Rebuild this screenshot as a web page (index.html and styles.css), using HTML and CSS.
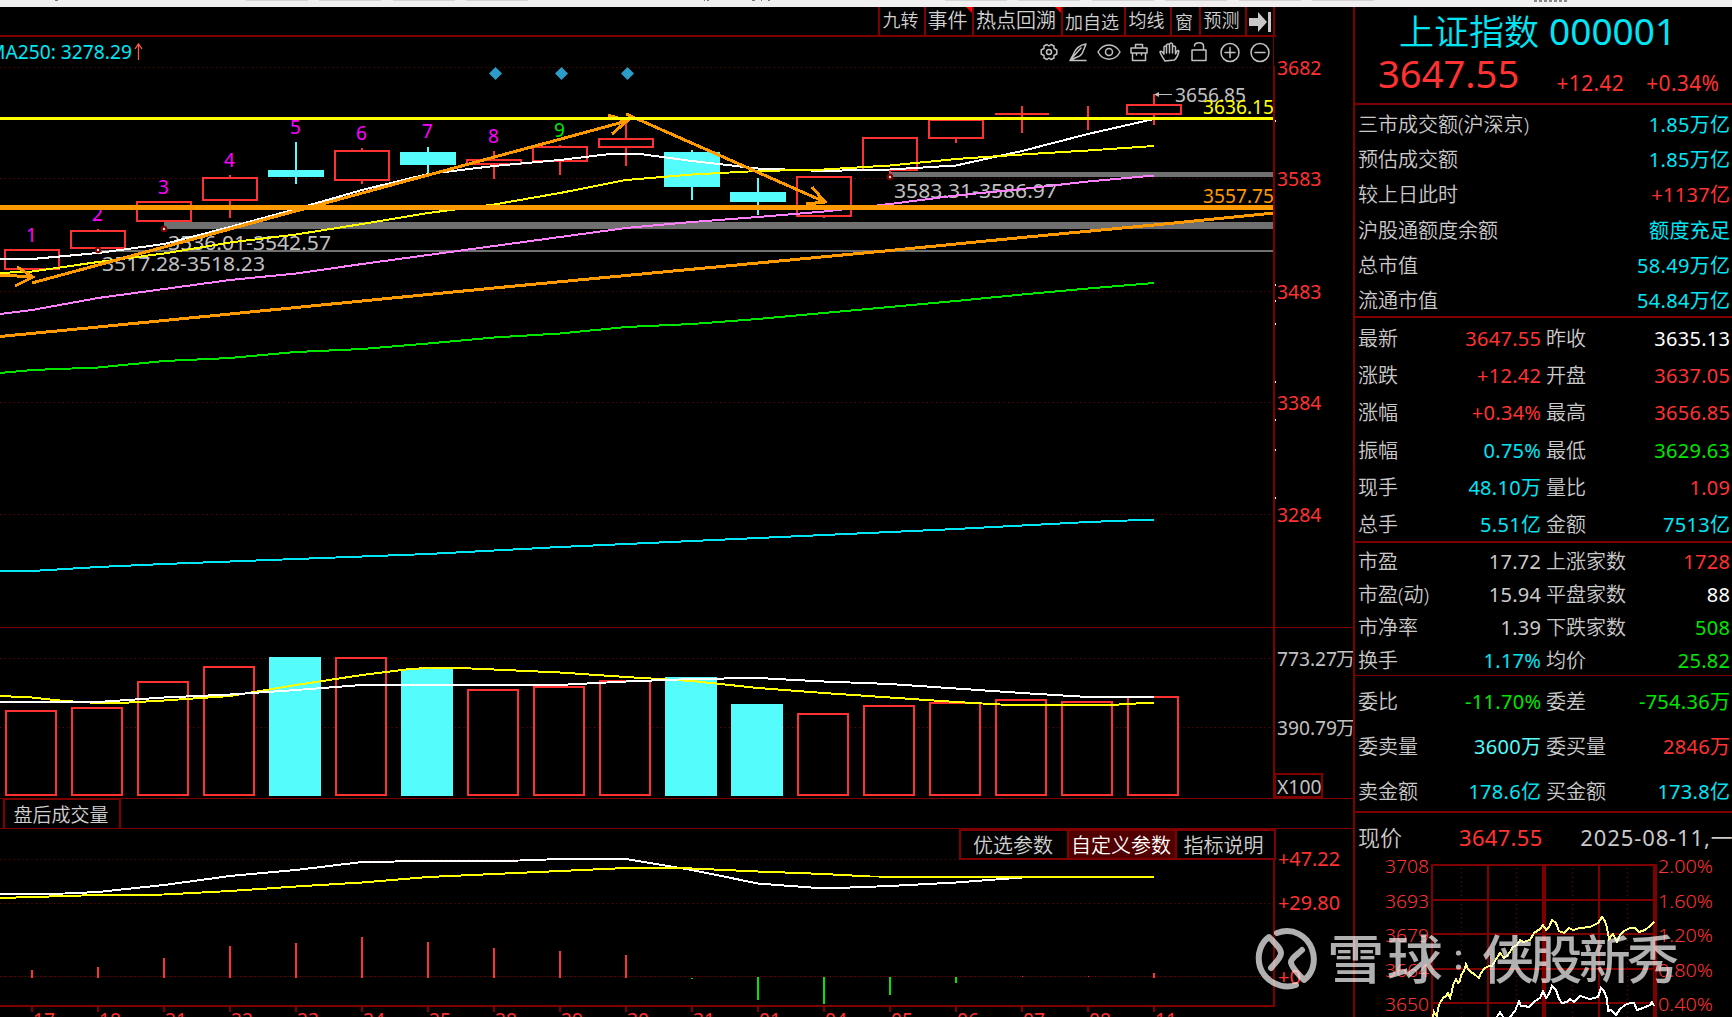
FILE: index.html
```html
<!DOCTYPE html>
<html lang="zh-CN">
<head>
    <meta charset="UTF-8">
    <meta name="viewport" content="width=device-width, initial-scale=1.0">
    <title>上证指数 000001</title>
    <link rel="stylesheet" href="styles.css">
</head>
<body>
    <svg class="strip" viewBox="0 0 1732 7">
        <path d="M246 .5h62M319 .5h62M393 .5h62M466 .5h62M945 .5h62M1018 .5h62M1092 .5h62M1165 .5h62M1239 .5h62M1312 .5h62" stroke="#d4d4d4"/>
        <path d="M55 .5h3M704 .5h1M707 .5h2M752 .5h3M761 .5h1M768 .5h2" stroke="#777"/>
        <path d="M1534 1h35" stroke="#888" stroke-width="2" stroke-dasharray="3 2"/>
    </svg>
    <div class="main">
        <div class="charts">
            <div class="toolbar">
                <div class="tool w46">九转</div>
                <div class="tool w48 big hot">事件</div>
                <div class="tool w89 big hot">热点回溯</div>
                <div class="tool w63 low">加自选</div>
                <div class="tool w46">均线</div>
                <div class="tool w29 low">窗</div>
                <div class="tool w46">预测</div>
                <div class="tool last">
                    <svg width="24" height="20" viewBox="0 0 24 20"><path d="M1 6h9V0l9 10-9 10v-6H1z" fill="#c8c8c8"/><path d="M21.5 0v20" stroke="#c8c8c8" stroke-width="3"/></svg>
                </div>
            </div>

            <svg class="panel" id="price" viewBox="0 37 1353 590"></svg>
            <svg class="panel" id="volume" viewBox="0 627 1353 171"></svg>
            <div class="tabs"><div class="tab">盘后成交量</div></div>
            <div class="indicator">
                <svg class="panel" id="macd" viewBox="0 829 1353 188"></svg>
                <div class="params">
                    <div class="param p1">优选参数</div>
                    <div class="param p2 active">自定义参数</div>
                    <div class="param p3">指标说明</div>
                </div>
            </div>
        </div>

        <div class="quote">
            <div class="head">
                <div class="name">上证指数 <span>000001</span></div>
                <div class="now red"><b>3647.55</b><i>+12.42</i><i>+0.34%</i></div>
            </div>
            <div class="group g1">
                <div class="row"><span>三市成交额(沪深京)</span><span class="cyan">1.85万亿</span></div>
                <div class="row"><span>预估成交额</span><span class="cyan">1.85万亿</span></div>
                <div class="row"><span>较上日此时</span><span class="red">+1137亿</span></div>
                <div class="row"><span>沪股通额度余额</span><span class="cyan">额度充足</span></div>
                <div class="row"><span>总市值</span><span class="cyan">58.49万亿</span></div>
                <div class="row"><span>流通市值</span><span class="cyan">54.84万亿</span></div>
            </div>
            <div class="group g2" id="g2"></div>
            <div class="group g3" id="g3"></div>
            <div class="group g4" id="g4"></div>
            <div class="mini">
                <div class="row mini-head"><span>现价</span><span class="red price">3647.55</span><span class="date">2025-08-11,一</span></div>
                <svg class="panel" id="minute" viewBox="1355 860 377 157"></svg>
            </div>
        </div>
    </div>

    <!-- watermark -->
    <svg class="watermark" viewBox="1250 920 440 80">
        <g fill="none" stroke="#fff" stroke-width="6" stroke-linecap="round" stroke-linejoin="round">
            <path d="M1277 933C1293 927 1307 936 1312 949C1317 964 1311 975 1304 980C1298 974 1291 966 1291 962C1291 958 1297 955 1302 950"/>
            <path d="M1296 985C1281 990 1265 981 1260 967C1256 953 1262 942 1269 937C1276 944 1281 949 1281 953C1281 958 1276 962 1271 968"/>
        </g>
        <g font-size="52" font-weight="500" fill="#fff">
            <text transform="translate(1327 979) scale(1.1 1)">雪</text>
            <text transform="translate(1387 979) scale(1.07 1)">球</text>
            <circle cx="1458.5" cy="953" r="2.6"/>
            <circle cx="1458.5" cy="967" r="2.6"/>
            <text x="1482" y="979" textLength="197">侠股新秀</text>
        </g>
    </svg>

    <script src="script.js"></script>
</body>
</html>
```

FILE: styles.css
```css
body {
    margin: 0;
    background: #000;
    color: #c0c0c0;
    font-family: "Noto Sans", "Noto Sans CJK SC", sans-serif;
    width: 1732px;
    height: 1017px;
    overflow: hidden;
    position: relative;
}
svg {
    display: block;
}
.strip {
    width: 1732px;
    height: 7px;
    background: #f0f0f0;
}
.main {
    display: flex;
    height: 1010px;
}
.charts {
    width: 1353px;
    display: flex;
    flex-direction: column;
}
.panel {
    width: 100%;
    flex: none;
}
.red { color: #ff3232; }
.cyan { color: #00e6f5; }
.aqua { color: #54fcfc; }
.green { color: #00e600; }
.white { color: #fff; }

/* toolbar */
.toolbar {
    display: flex;
    width: 1276px;
    height: 30px;
    box-sizing: border-box;
    padding-left: 878px;
    border-bottom: 2px solid #800000;
    color: #d0d0d0;
    font-family: "Noto Sans CJK SC", sans-serif;
    font-weight: 350;
    font-size: 18px;
    line-height: 25px;
}
.tool {
    box-sizing: border-box;
    border-left: 2px solid #800000;
    padding-right: 3px;
    text-align: center;
    white-space: nowrap;
    position: relative;
    flex: none;
}
.w46 { width: 46px; }
.w48 { width: 48px; }
.w89 { width: 89px; }
.w63 { width: 63px; }
.w29 { width: 29px; }
.big { font-size: 20px; }
.low { line-height: 28px; }
.last {
    width: 30px;
    border-right: 2px solid #800000;
    padding: 5px 0 0 1px;
}
.hot::after {
    content: "";
    position: absolute;
    right: 0;
    top: 0;
    border-top: 6px solid #f00;
    border-left: 6px solid transparent;
}

/* indicator */
.tabs {
    height: 31px;
    box-sizing: border-box;
    border-top: 1px solid #800000;
    border-bottom: 1px solid #800000;
    padding-left: 3px;
}
.tab {
    width: 118px;
    height: 29px;
    box-sizing: border-box;
    border: 2px solid #800000;
    border-top-width: 1px;
    border-bottom: 0;
    padding-right: 2px;
    text-align: center;
    color: #d0d0d0;
    font-family: "Noto Sans CJK SC", sans-serif;
    font-weight: 350;
    font-size: 19px;
    line-height: 27px;
}
.indicator {
    position: relative;
}
.params {
    position: absolute;
    left: 959px;
    top: 0;
    display: flex;
    width: 317px;
    height: 31px;
    box-sizing: border-box;
    border: 2px solid #800000;
    background: #000;
    color: #d0d0d0;
    font-family: "Noto Sans CJK SC", sans-serif;
    font-weight: 350;
    font-size: 20px;
    line-height: 27px;
}
.param {
    text-align: center;
    box-sizing: border-box;
}
.p1 { width: 106px; padding-right: 2px; }
.p2 { width: 110px; padding-right: 2px; }
.p3 { width: 97px; padding-right: 4px; }
.param.active {
    background: #500000;
    border: 2px solid #800000;
    border-top: 0;
    border-bottom: 0;
    color: #fff;
}

/* quote */
.quote {
    width: 379px;
    box-sizing: border-box;
    border-left: 2px solid #800000;
    font-size: 20px;
    font-weight: 350;
}
.quote span, .quote i {
    white-space: nowrap;
}
.head {
    height: 98px;
    box-sizing: border-box;
    border-bottom: 2px solid #800000;
}
.name {
    color: #00e6f5;
    font-size: 35px;
    line-height: 47px;
    height: 43px;
    padding-left: 44px;
}
.name span {
    font-size: 37px;
    font-weight: 400;
    margin-left: 1px;
}
.now {
    display: flex;
    align-items: baseline;
    line-height: 46px;
}
.now b {
    font-size: 38.2px;
    font-weight: 400;
    margin-left: 23px;
    width: 179px;
}
.now i {
    font-style: normal;
    font-weight: 400;
    font-size: 21px;
    width: 92px;
    position: relative;
    top: 3px;
    left: 4px;
    letter-spacing: 0.3px;
}
.group {
    box-sizing: border-box;
    border-bottom: 2px solid #800000;
    padding: 0 2px 0 3px;
    display: flex;
    flex-direction: column;
}
.row {
    display: flex;
    justify-content: space-between;
    align-items: center;
    flex: none;
    line-height: 20px;
}
.row span {
    color: #cacaca;
}
.row .red, .row .cyan, .row .green, .row .white, .row .aqua, .row .gray {
    font-weight: 400;
    letter-spacing: 0.3px;
    margin-right: -0.3px;
}
.row .red { color: #ff3232; }
.row .cyan { color: #00e6f5; }
.row .aqua { color: #54fcfc; }
.row .green { color: #00e600; }
.row .white { color: #fff; }
.half {
    display: flex;
    justify-content: space-between;
    width: 183px;
}
.half + .half {
    width: 184px;
}
.g1 { height: 213px; padding-top: 2px; }
.g1 .row { height: 35.3px; }
.g2 { height: 225px; padding-top: 2px; }
.g2 .row { height: 37.3px; }
.g3 { height: 133px; padding-top: 2px; border-bottom-width: 1px; }
.g3 .row { height: 33.1px; }
.g4 { height: 137px; padding-top: 3px; }
.g4 .row { height: 45px; }
.mini-head {
    height: 48px;
    margin-bottom: -1px;
    font-size: 22px;
    padding: 0 0 0 3px;
    justify-content: flex-start;
}
.row.mini-head .price {
    font-size: 22px;
    margin-left: 57px;
    letter-spacing: 0.3px;
}
.mini-head .date {
    font-size: 22px;
    margin-left: 38px;
    font-weight: 400;
    letter-spacing: 0.9px;
}

/* svg text */
svg text {
    font-family: "Noto Sans", "Noto Sans CJK SC", sans-serif;
}
.watermark {
    position: absolute;
    left: 1250px;
    top: 920px;
    width: 440px;
    height: 80px;
    opacity: 0.69;
}
```

FILE: script.js
```js
const RED = '#ff3232', DARK = '#800000', AQUA = '#54fcfc', ORANGE = '#ff9900', GRAY = '#c0c0c0', GREEN = '#00e600';
const cx = i => 32 + i * 66;

const rect = (x, y, w, h, fill) => `<rect x="${x}" y="${y}" width="${w}" height="${h}" fill="${fill}"/>`;
const box = (x, y, w, h, color) => `<rect x="${x + 1}" y="${y + 1}" width="${w - 2}" height="${h - 2}" fill="#000" stroke="${color}" stroke-width="2" shape-rendering="crispEdges"/>`;
const line = (pts, color, w = 2) => `<polyline points="${pts}" fill="none" stroke="${color}" stroke-width="${w}" shape-rendering="crispEdges"/>`;
const text = (x, y, str, color, len, size = 19, anchor = 'start') =>
    `<text x="${x}" y="${y}" fill="${color}" font-size="${size}" text-anchor="${anchor}"${len ? ` textLength="${len}" lengthAdjust="spacingAndGlyphs"` : ''}>${str}</text>`;
const dots = (y, step = 3.5) => `<path d="M0 ${y + .5}H1273" stroke="${DARK}" stroke-dasharray="1 ${step}"/>`;

// price panel
// open/close box top, bottom, wick top, wick bottom, filled
const candles = [
    [249, 270, 249, 270], [230, 249, 229, 249], [201, 222, 201, 222], [177, 201, 175, 218],
    [170, 177, 142, 184, 1], [150, 181, 148, 184], [152, 165, 147, 175, 1], [159, 165, 151, 179],
    [146, 162, 145, 175], [138, 148, 120, 166], [152, 187, 150, 200, 1], [192, 202, 178, 215, 1],
    [176, 217, 176, 218], [137, 171, 137, 177], [119, 139, 119, 143], [113, 115, 106, 133],
    [117, 119, 106, 130], [104, 115, 94, 125]
];
let s = '';
[67, 178, 291, 402, 514].forEach(y => s += dots(y));
s += rect(164, 222, 1110, 7, '#707070') + rect(98, 250, 1176, 2, '#707070') + rect(890, 172, 384, 5, '#707070');
['1', '2', '3', '4', '5', '6', '7', '8', '9'].forEach((n, i) => {
    const y = [242, 221, 194, 167, 134, 140, 138, 143, 137][i];
    s += text(cx(i) - .5, y, n, i === 8 ? GREEN : '#ff00ff', 0, 19, 'middle');
});
candles.forEach(([t, b, wt, wb, full], i) => {
    const c = cx(i);
    s += rect(c - 1, wt, 2, wb - wt, full ? AQUA : RED);
    if (full) s += rect(c - 28, t, 56, b - t, AQUA);
    else if (b - t < 4) s += rect(c - 27, t, 54, 2, RED);
    else s += box(c - 28, t, 56, b - t, RED);
});
s += text(168, 250, '3536.01-3542.57', GRAY, 163) + text(102, 271, '3517.28-3518.23', GRAY, 163);
s += text(894, 198, '3583.31-3586.97', GRAY, 163);
s += line('0,259 32,259 98,253 164,244 230,227 296,209 362,190 428,174 494,166 560,160 610,154 626,153.5 640,154 692,161 758,168.5 824,171 860,170 890,169.5 956,165.5 1022,151 1088,134 1154,119', '#fff');
s += line('0,273 32,271.5 98,262 164,253.5 230,242.5 296,234.5 362,224 428,213 494,204.5 560,193 626,180 692,174.5 758,171 824,169.5 890,165.5 956,159 1022,154.5 1088,150.5 1154,146', '#ffff00');
s += line('0,314 32,310 98,298 164,289 230,280 296,273.5 362,264 428,255 494,246 560,237 626,228 692,222 758,217 824,211.5 890,204 956,195.5 1022,189 1088,181.5 1154,175.5', '#ff80ff');
s += line('0,373 32,370 98,367.5 164,361 230,358 296,352 362,349 428,343.5 494,337.5 560,333.5 626,327 692,324 758,319 824,313 890,307 956,301 1022,294.5 1088,288.5 1154,283', GREEN);
s += line('0,571 32,571 98,567 164,564 296,559 428,554 560,547 692,541 824,535 956,529 1088,522 1154,519.5', '#00e6f5');
s += line('0,336.5 98,327 230,314 362,301 494,288 626,275.5 758,263 890,250.5 1022,237.5 1154,225 1274,213', ORANGE, 3);
s += rect(0, 205, 1274, 5, ORANGE);
s += line('0,275 33,277', ORANGE, 3) + line('17,267 33,277 15,286', ORANGE, 3);
s += line('32,283 296,211 627,121', ORANGE, 3) + line('608,115 627,121 612,134', ORANGE, 3);
s += line('626,114 825,202', ORANGE, 3) + line('812,187 825,202 806,204', ORANGE, 3);
s += rect(0, 117, 1274, 3, '#ffff00');
[[164, 229], [98, 250], [890, 177]].forEach(([x, y]) => s += `<circle cx="${x}" cy="${y}" r="2.2" fill="#ddd" stroke="${DARK}" stroke-width="2"/>`);
[495.5, 561.5, 627.5].forEach(x => s += `<path d="M${x} 67l6.5 6.5-6.5 6.5-6.5-6.5z" fill="#2b9dc9"/>`);
s += text(1175, 102, '3656.85', GRAY, 71) + `<path d="M1172 94.5H1156" stroke="${GRAY}"/><path d="M1154 94.5l5-2.5v5z" fill="${GRAY}"/>`;
s += text(1203, 114, '3636.15', '#ffff00', 71) + text(1203, 203, '3557.75', ORANGE, 71);
s += text(132, 59, 'MA250: 3278.29', '#00e6f5', 144, 19, 'end');
s += '<path d="M138.5 60V44M135 49l3.500-5 3.500 5" fill="none" stroke="#ff5a46" stroke-width="1.300"/>';
s += rect(1273, 37, 1, 30, DARK) + rect(1273, 66, 2, 561, DARK);
[120, 284, 300, 323, 381, 419, 449, 497].forEach(y => s += rect(1275, y, 1, 2, '#fff'));
[[75, 3682], [186, 3583], [299, 3483], [410, 3384], [522, 3284]].forEach(([y, v]) => s += text(1277, y, v, RED, 44.5));

// drawing tools in the corner
s += `<g fill="none" stroke="#c0c0c0" stroke-width="1.500" stroke-linecap="round" stroke-linejoin="round">
    <path d="M1047 44.500l2 1.500 2-1.500 3 1.500v2.500l2.800 1.500v4l-2.800 1.500v2.500l-3 1.500-2-1.500-2 1.500-3-1.500v-2.500l-2.800-1.500v-4l2.800-1.500v-2.500z"/><circle cx="1049" cy="52" r="2.500"/>
    <path d="M1086 44c-8 1-11 6-13 11l-3 5.500 6-3c4-1 6-3 7-6zM1081 48l-9 10M1070 60.500h16"/>
    <path d="M1098 52c5-9.500 17-9.500 22 0-5 9.500-17 9.500-22 0z"/><circle cx="1109" cy="52" r="3.500"/>
    <path d="M1131 48h16v5h-16zM1132.500 53v7.500h13V53M1135.500 48v-3.500h7V48M1136.500 53v2M1141.500 53v2"/>
    <path d="M1165 61c-2-3-4-6-5-9 1-1.500 2.500 0 4 2v-7c.5-1.500 2-1.500 2.500 0v6-8c.5-1.500 2.500-1.500 3 0v8-9c.5-1.500 2.500-1.500 3 0v9-6c.5-1.500 2.500-1.500 3 0v7l1.500-3c1-1 2-.5 1.800.5-.8 4-2 6.500-4.300 8.500z"/>
    <path d="M1192 50h14v10.500h-14zM1194.500 46c0-4.500 9-4.500 9 0v4"/>
    <circle cx="1230" cy="52.500" r="9"/><path d="M1225 52.500h10M1230 47.500v10"/>
    <circle cx="1260" cy="52.500" r="9"/><path d="M1255 52.500h10"/></g>`;
document.getElementById('price').innerHTML = s;

// volume panel
s = dots(658) + dots(727);
[710, 707, 681, 666, 657, 657, 669, 689, 686, 680, 677, 704, 713, 705, 702, 699, 701, 696].forEach((t, i) => {
    const full = [4, 6, 10, 11].includes(i);
    s += full ? rect(cx(i) - 27, t, 52, 796 - t, AQUA) : box(cx(i) - 27, t, 52, 796 - t, RED);
});
s += line('0,696 32,697.5 64,701 98,703 120,703 164,700.5 230,696 296,685 362,675 410,669 428,668 460,668 494,669.5 560,672.5 626,677 692,681 758,688 824,693 890,697.5 956,702 1000,704.5 1022,705 1110,705 1154,702.5', '#ffff00');
s += line('0,702 98,702 164,697.5 230,694.5 296,690 362,685 558,685 626,681.5 692,679 758,678 824,681.5 890,684 956,688.5 1022,693 1088,697 1154,697', '#fff');
s += rect(0, 627, 1353, 1, DARK) + rect(1273, 627, 2, 171, DARK);
s += text(1277, 666, '773.27', GRAY, 60, 19) + text(1336, 666, '万', GRAY, 0, 19);
s += text(1277, 735, '390.79', GRAY, 60, 19) + text(1336, 735, '万', GRAY, 0, 19);
s += box(1274, 773, 49, 25, DARK) + text(1277, 794, 'X100', GRAY, 44.5);
document.getElementById('volume').innerHTML = s;

// indicator panel
s = dots(859) + dots(903) + dots(976, 1.5);
[970, 967, 958, 946, 943, 937, 942, 948, 951, 955].forEach((t, i) => s += rect(cx(i) - 1, t, 2, 978 - t, RED));
[[10, 978, 979], [11, 977, 1000], [12, 977, 1004], [13, 977, 995], [14, 977, 983]].forEach(([i, t, b]) => s += rect(cx(i) - 1, t, 2, b - t, GREEN));
s += rect(cx(15), 976, 1, 1, RED) + rect(cx(16), 976, 1, 1, RED) + rect(cx(17) - 1, 973, 2, 5, RED);
s += line('0,894 65,893.5 98,892 164,885 230,876 296,870 362,862 428,861 520,860.5 560,859 626,859 692,870 758,883.5 824,888.5 890,886 956,882.5 1022,877.5', '#fff');
s += line('0,898 98,895 164,894.5 230,891 296,886.5 362,882.5 428,877 494,874 560,871 626,868 692,868.5 758,871.5 824,874 870,876.5 1154,877', '#ffff00');
s += rect(1273, 829, 2, 178, DARK) + rect(0, 1005, 1275, 2, DARK);
['17', '18', '21', '22', '23', '24', '25', '28', '29', '30', '31', '01', '04', '05', '06', '07', '08', '11'].forEach((d, i) => {
    s += rect(cx(i) - 1, 1007, 2, 5, DARK) + text(cx(i) + 1, 1027, d, RED, 22);
});
s += text(1278, 866, '+47.22', RED, 62) + text(1278, 910, '+29.80', RED, 62) + text(1278, 984, '+0', RED, 23);
document.getElementById('macd').innerHTML = s;

// minute chart
s = '';
[864, 899, 933, 968, 1002].forEach(y => s += rect(1431, y, 226, 2, DARK));
[[1431, 2], [1487, 2], [1542, 4], [1598, 2], [1653, 4]].forEach(([x, w]) => s += rect(x, 864, w, 153, DARK));
[1461.5, 1516.5, 1572.5, 1627.5].forEach(x => s += `<path d="M${x} 868V1017" stroke="${DARK}" stroke-dasharray="1 3.500"/>`);
[[3708, '2.00%'], [3693, '1.60%'], [3679, '1.20%'], [3664, '0.80%'], [3650, '0.40%']].forEach(([p, pct], i) => {
    const y = [873, 908, 942, 977, 1011][i];
    s += text(1385, y, p, RED, 44) + text(1658, y, pct, RED, 55);
});
s += line('1433,1017 1434,1012 1437,1017 1438,1008 1440,1003 1443,998 1446,996 1448,993 1450,998 1452,991 1453,985 1456,979 1458,983 1460,981 1461,975 1464,971 1466,964 1468,969 1471,972 1474,974 1479,978 1481,973 1485,968 1489,966 1492,966 1495,961 1500,953 1504,958 1508,955 1513,947 1517,945 1520,940 1523,942 1530,940 1534,933 1540,929 1543,925 1546,930 1549,927 1552,920 1556,923 1559,931 1564,933 1569,928 1573,930 1580,928 1590,927 1598,923 1602,917 1605,921 1607,928 1609,939 1613,934 1617,942 1620,935 1624,931 1630,928 1635,928 1639,932 1645,930 1650,926 1654,922', '#ffff80');
s += line('1497,1017 1500,1012 1503,1017', '#fff') + line('1510,1017 1515,1011 1519,1001 1521,1006 1524,1006 1529,1007 1535,1001 1540,998 1543,991 1546,998 1549,994 1552,986 1556,990 1559,999 1562,1003 1567,1002 1570,999 1574,1002 1580,996 1590,999 1598,997 1601,988 1604,991 1607,999 1608,1011 1611,1010 1616,1015 1620,1009 1625,1005 1630,1003 1634,1003 1637,1010 1643,1008 1650,1005 1652,1002 1654,1006', '#fff');
document.getElementById('minute').innerHTML = s;

// quote tables
const tables = {
    g2: [
        ['最新', '3647.55', 'red', '昨收', '3635.13', 'white'],
        ['涨跌', '+12.42', 'red', '开盘', '3637.05', 'red'],
        ['涨幅', '+0.34%', 'red', '最高', '3656.85', 'red'],
        ['振幅', '0.75%', 'cyan', '最低', '3629.63', 'green'],
        ['现手', '48.10万', 'cyan', '量比', '1.09', 'red'],
        ['总手', '5.51亿', 'cyan', '金额', '7513亿', 'cyan']
    ],
    g3: [
        ['市盈', '17.72', 'gray', '上涨家数', '1728', 'red'],
        ['市盈(动)', '15.94', 'gray', '平盘家数', '88', 'white'],
        ['市净率', '1.39', 'gray', '下跌家数', '508', 'green'],
        ['换手', '1.17%', 'cyan', '均价', '25.82', 'green']
    ],
    g4: [
        ['委比', '-11.70%', 'green', '委差', '-754.36万', 'green'],
        ['委卖量', '3600万', 'aqua', '委买量', '2846万', 'red'],
        ['卖金额', '178.6亿', 'cyan', '买金额', '173.8亿', 'cyan']
    ]
};
for (const id in tables) {
    document.getElementById(id).innerHTML = tables[id].map(([a, b, c, d, e, f]) =>
        `<div class="row"><div class="half"><span>${a}</span><span class="${c}">${b}</span></div>` +
        `<div class="half"><span>${d}</span><span class="${f}">${e}</span></div></div>`).join('');
}
```
